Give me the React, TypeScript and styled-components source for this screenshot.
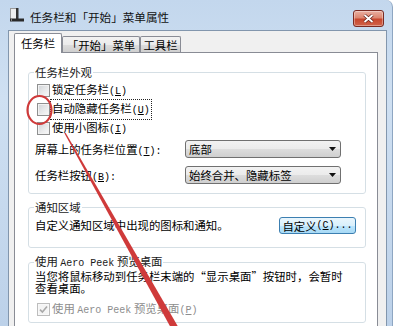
import React from "react";
import styled, { createGlobalStyle } from "styled-components";

const CJK = `"Noto Sans CJK SC", "Noto Sans", sans-serif`;

const GlobalStyle = createGlobalStyle`
  html, body {
    margin: 0;
    padding: 0;
    background: #ffffff;
  }
  body {
    width: 393px;
    height: 326px;
    overflow: hidden;
  }
`;

const Window = styled.div`
  position: relative;
  width: 393px;
  height: 326px;
  overflow: hidden;
  display: flex;
  flex-direction: column;
  background: linear-gradient(180deg, #c3d7ed 0%, #cfe0f2 30%, #bcd1e9 100%);
  border-right: 1px solid #8ea6c2;
  border-top-right-radius: 7px;
  box-sizing: border-box;
  font-family: ${CJK};
  font-size: 11.4px;
  color: #000;
`;

const TitleBar = styled.div`
  height: 30px;
  flex: none;
  display: flex;
  align-items: center;
  padding-left: 9px;
  gap: 5px;
`;

const Title = styled.div`
  font-size: 11.6px;
  line-height: 14px;
  margin-top: 4px;
  color: #111;
`;

const CloseButton = styled.div`
  align-self: flex-start;
  margin: 10px 8px 0 auto;
  width: 29px;
  height: 15px;
  border: 1px solid #7a2a22;
  border-radius: 3px;
  background: linear-gradient(180deg, #eab0a2 0%, #dc8670 45%, #c8472e 55%, #d0634a 100%);
  display: flex;
  align-items: center;
  justify-content: center;
  box-shadow: inset 0 0 0 1px rgba(255, 255, 255, 0.35);
`;

const Body = styled.div`
  flex: 1;
  display: flex;
  padding: 0 5px 0 8px;
  min-height: 0;
`;

const Client = styled.div`
  flex: 1;
  display: flex;
  flex-direction: column;
  background: #f0f0f0;
  border: 1px solid #8296ad;
  border-bottom: none;
  padding: 2px 8px 0 5px;
  min-height: 0;
`;

const TabRow = styled.div`
  height: 19px;
  display: flex;
  align-items: flex-end;
  flex: none;
`;

const Tab = styled.div<{ $active?: boolean; $w: number }>`
  position: relative;
  z-index: ${(p) => (p.$active ? 2 : 1)};
  width: ${(p) => p.$w}px;
  height: ${(p) => (p.$active ? 20 : 16)}px;
  margin-bottom: ${(p) => (p.$active ? -1 : 0)}px;
  box-sizing: border-box;
  border: 1px solid #898c95;
  border-bottom: none;
  border-radius: 2px 2px 0 0;
  background: ${(p) =>
    p.$active
      ? "#ffffff"
      : "linear-gradient(180deg, #f2f2f2 0%, #ebebeb 50%, #dddddd 51%, #cfcfcf 100%)"};
  display: flex;
  align-items: center;
  justify-content: center;
  font-size: 11.4px;
  padding-bottom: ${(p) => (p.$active ? 2 : 0)}px;
`;

const Panel = styled.div`
  flex: 1;
  background: #ffffff;
  border: 1px solid #898c95;
  border-bottom: none;
  padding: 12px 11px 0 13px;
  display: flex;
  flex-direction: column;
  gap: 6px;
`;

const Group = styled.fieldset<{ $pb: number }>`
  margin: 0;
  min-width: 0;
  border: 1px solid #d5dfe5;
  border-radius: 3px;
  padding: 0 9px ${(p) => p.$pb}px 6px;
  box-shadow: inset 1px 1px 0 #ffffff;
`;

const Legend = styled.legend`
  padding: 0 1px;
  margin-left: -1px;
  line-height: 14px;
  color: #1a1a1a;
`;

const Stack = styled.div<{ $pt?: number }>`
  display: flex;
  flex-direction: column;
  padding-top: ${(p) => p.$pt ?? 0}px;
`;

const CheckRow = styled.div<{ $mt?: number; $disabled?: boolean }>`
  height: 19px;
  display: flex;
  align-items: center;
  gap: 1px;
  padding-left: 2px;
  margin-top: ${(p) => p.$mt ?? 0}px;
  color: ${(p) => (p.$disabled ? "#8d8d8d" : "#000")};
`;

const Box = styled.span<{ $disabled?: boolean }>`
  width: 13px;
  height: 13px;
  box-sizing: border-box;
  flex: none;
  border: 1px solid ${(p) => (p.$disabled ? "#bdbdbd" : "#8e8f8f")};
  background: ${(p) =>
    p.$disabled ? "#f4f4f4" : "linear-gradient(135deg, #cfd2d6 0%, #e9eaeb 55%, #fafafa 100%)"};
  box-shadow: inset 0 0 0 1px ${(p) => (p.$disabled ? "#f8f8f8" : "#f2f2f2")};
  display: flex;
  align-items: center;
  justify-content: center;
`;

const CheckLabel = styled.span<{ $focus?: boolean }>`
  padding: 0 1px;
  line-height: 16px;
  outline: ${(p) => (p.$focus ? "1px dotted #222" : "none")};
`;

const SelectRow = styled.div<{ $mt: number }>`
  height: 18px;
  margin-top: ${(p) => p.$mt}px;
  display: flex;
  align-items: center;
  justify-content: space-between;
`;

const Select = styled.div`
  width: 156px;
  height: 18px;
  margin-right: 15px;
  box-sizing: border-box;
  border: 1px solid #707070;
  border-radius: 3px;
  background: linear-gradient(180deg, #f2f2f2 0%, #ebebeb 50%, #dddddd 51%, #cfcfcf 100%);
  display: flex;
  align-items: center;
  justify-content: space-between;
  padding: 0 4px 0 3px;
`;

const ButtonRow = styled.div`
  height: 19px;
  margin-top: 1px;
  display: flex;
  align-items: center;
  justify-content: space-between;
`;

const Button = styled.div`
  width: 77px;
  height: 17px;
  box-sizing: border-box;
  border: 1px solid #3c7fb1;
  border-radius: 3px;
  background: linear-gradient(180deg, #eaf6fd 0%, #d9f0fc 50%, #bee6fd 51%, #a7d9f5 100%);
  display: flex;
  align-items: center;
  justify-content: center;
  margin-top: 2px;
`;

const Desc = styled.div`
  line-height: 12px;
  margin-top: -1px;
`;

const Lat = styled.span`
  font-family: "Liberation Mono", "DejaVu Sans Mono", monospace;
  font-size: 10px;
`;

const Overlay = styled.svg`
  position: absolute;
  left: 0;
  top: 0;
  pointer-events: none;
`;

const Key = ({ k }: { k: string }) => (
  <Lat>
    (<u>{k}</u>)
  </Lat>
);

const Check = ({
  label,
  k,
  mt,
  focus,
  disabled,
  checked,
}: {
  label: React.ReactNode;
  k: string;
  mt?: number;
  focus?: boolean;
  disabled?: boolean;
  checked?: boolean;
}) => (
  <CheckRow $mt={mt} $disabled={disabled}>
    <Box $disabled={disabled}>
      {checked && (
        <svg width="9" height="9" viewBox="0 0 9 9">
          <path d="M1 4.6 L3.4 7 L8 1.6" fill="none" stroke="#a9a9a9" strokeWidth="1.6" />
        </svg>
      )}
    </Box>
    <CheckLabel $focus={focus}>
      {label}
      <Key k={k} />
    </CheckLabel>
  </CheckRow>
);

const Arrow = () => (
  <svg width="7" height="4" viewBox="0 0 7 4">
    <polygon points="0,0 7,0 3.5,4" fill="#111" />
  </svg>
);

const TaskbarIcon = () => (
  <svg width="16" height="16" viewBox="0 0 16 16">
    <rect x="1.5" y="1.5" width="6" height="11" fill="#eeeeee" stroke="#9a9a9a" />
    <rect x="7" y="1" width="2.5" height="12" fill="#333" />
    <rect x="1" y="11.5" width="14" height="3" fill="#2a2a2a" />
    <rect x="2" y="12.5" width="1" height="1" fill="#ddd" />
  </svg>
);

export default function App() {
  return (
    <>
      <GlobalStyle />
      <Window>
        <TitleBar>
          <TaskbarIcon />
          <Title>任务栏和「开始」菜单属性</Title>
          <CloseButton>
            <svg width="11" height="9" viewBox="0 0 11 9">
              <path d="M1.5 1 L9.5 8 M9.5 1 L1.5 8" stroke="#5a1a14" strokeWidth="3.2" />
              <path d="M1.5 1 L9.5 8 M9.5 1 L1.5 8" stroke="#ffffff" strokeWidth="1.9" />
            </svg>
          </CloseButton>
        </TitleBar>
        <Body>
          <Client>
            <TabRow>
              <Tab $active $w={48}>任务栏</Tab>
              <Tab $w={78}>「开始」菜单</Tab>
              <Tab $w={41}>工具栏</Tab>
            </TabRow>
            <Panel>
              <Group $pb={9}>
                <Legend>任务栏外观</Legend>
                <Stack $pt={2}>
                  <Check label="锁定任务栏" k="L" />
                  <Check label="自动隐藏任务栏" k="U" focus />
                  <Check label="使用小图标" k="I" />
                  <SelectRow $mt={2}>
                    <span>
                      屏幕上的任务栏位置<Key k="T" />
                      <Lat>:</Lat>
                    </span>
                    <Select>
                      <span>底部</span>
                      <Arrow />
                    </Select>
                  </SelectRow>
                  <SelectRow $mt={8}>
                    <span>
                      任务栏按钮<Key k="B" />
                      <Lat>:</Lat>
                    </span>
                    <Select>
                      <span>始终合并、隐藏标签</span>
                      <Arrow />
                    </Select>
                  </SelectRow>
                </Stack>
              </Group>
              <Group $pb={13}>
                <Legend>通知区域</Legend>
                <ButtonRow>
                  <span>自定义通知区域中出现的图标和通知。</span>
                  <Button>
                    自定义<Key k="C" />
                    <Lat>...</Lat>
                  </Button>
                </ButtonRow>
              </Group>
              <Group $pb={3}>
                <Legend>
                  使用 <Lat>Aero Peek</Lat> 预览桌面
                </Legend>
                <Desc>
                  当您将鼠标移动到任务栏末端的“显示桌面”按钮时，会暂时
                  <br />
                  查看桌面。
                </Desc>
                <Check
                  mt={6}
                  disabled
                  checked
                  k="P"
                  label={
                    <>
                      使用 <Lat>Aero Peek</Lat> 预览桌面
                    </>
                  }
                />
              </Group>
            </Panel>
          </Client>
        </Body>
        <Overlay width="393" height="326" viewBox="0 0 393 326">
          <ellipse cx="39.5" cy="110" rx="12" ry="14" fill="none" stroke="#cf3a3a" strokeWidth="2.2" />
          <polygon points="65.6,132.7 179,328.3 173,331.7 64.4,133.3" fill="#cf3a3a" />
        </Overlay>
      </Window>
    </>
  );
}
